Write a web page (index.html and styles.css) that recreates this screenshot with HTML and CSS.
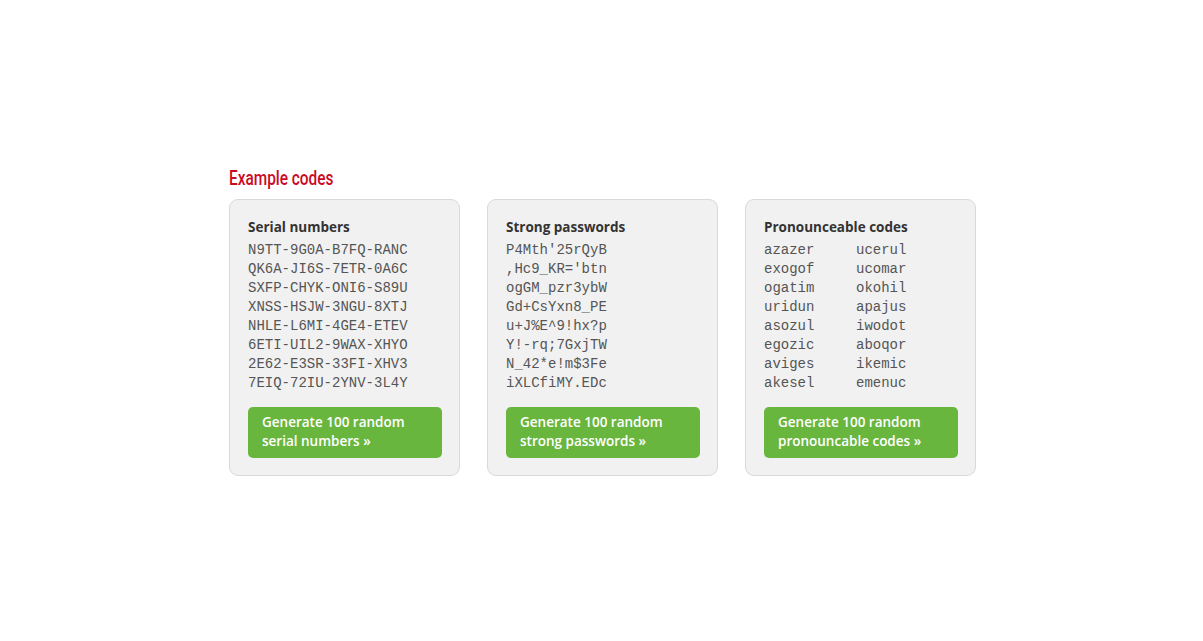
FILE: index.html
```html
<!DOCTYPE html>
<html>
<head>
<meta charset="utf-8">
<link rel="stylesheet" href="styles.css">
</head>
<body>
<main class="wrap">
  <h2 class="heading"><span class="heading-text">Example codes</span></h2>
  <div class="cards">
    <section class="card">
      <h3 class="card-title">Serial numbers</h3>
      <div class="codes">
        <div>N9TT-9G0A-B7FQ-RANC</div>
        <div>QK6A-JI6S-7ETR-0A6C</div>
        <div>SXFP-CHYK-ONI6-S89U</div>
        <div>XNSS-HSJW-3NGU-8XTJ</div>
        <div>NHLE-L6MI-4GE4-ETEV</div>
        <div>6ETI-UIL2-9WAX-XHYO</div>
        <div>2E62-E3SR-33FI-XHV3</div>
        <div>7EIQ-72IU-2YNV-3L4Y</div>
      </div>
      <a class="btn" href="#">Generate 100 random<br>serial numbers »</a>
    </section>
    <section class="card">
      <h3 class="card-title">Strong passwords</h3>
      <div class="codes">
        <div>P4Mth'25rQyB</div>
        <div>,Hc9_KR='btn</div>
        <div>ogGM_pzr3ybW</div>
        <div>Gd+CsYxn8_PE</div>
        <div>u+J%E^9!hx?p</div>
        <div>Y!-rq;7GxjTW</div>
        <div>N_42*e!m$3Fe</div>
        <div>iXLCfiMY.EDc</div>
      </div>
      <a class="btn" href="#">Generate 100 random<br>strong passwords »</a>
    </section>
    <section class="card">
      <h3 class="card-title">Pronounceable codes</h3>
      <div class="codes two-col">
        <div>azazer</div><div>ucerul</div>
        <div>exogof</div><div>ucomar</div>
        <div>ogatim</div><div>okohil</div>
        <div>uridun</div><div>apajus</div>
        <div>asozul</div><div>iwodot</div>
        <div>egozic</div><div>aboqor</div>
        <div>aviges</div><div>ikemic</div>
        <div>akesel</div><div>emenuc</div>
      </div>
      <a class="btn" href="#">Generate 100 random<br>pronouncable codes »</a>
    </section>
  </div>
</main>
</body>
</html>
```

FILE: styles.css
```css
html, body {
  margin: 0;
  padding: 0;
  background: #ffffff;
}
body {
  font-family: "Open Sans", "DejaVu Sans", sans-serif;
  color: #333333;
}
.wrap {
  width: 747px;
  margin-left: calc(50% - 372.5px);
  padding-top: 166px;
}
.heading {
  margin: 0 0 8px 0;
  font-family: Roboto, "Liberation Sans", sans-serif;
  font-weight: 500;
  font-size: 20px;
  line-height: 25px;
  color: #cc0a1f;
}
.heading-text {
  display: inline-block;
  transform: scaleX(0.77);
  transform-origin: left center;
}
.cards {
  display: flex;
  gap: 27px;
}
.card {
  width: 231px;
  flex: none;
  box-sizing: border-box;
  background: #f1f1f1;
  border: 1px solid #d9d9d9;
  border-radius: 9px;
  padding: 17px 17px 17px 18px;
}
.card-title {
  margin: 0 0 4px 0;
  font-size: 13.5px;
  font-weight: 700;
  line-height: 20px;
  color: #333333;
}
.codes {
  font-family: "Liberation Mono", "Courier New", monospace;
  font-size: 14px;
  line-height: 19px;
  color: #555555;
}
.two-col {
  display: grid;
  grid-template-columns: 92px auto;
}
.btn {
  display: block;
  margin-top: 14px;
  background: #69b63f;
  color: #ffffff;
  text-decoration: none;
  border-radius: 5px;
  padding: 6px 14px 7px 14px;
  font-size: 13.5px;
  font-weight: 600;
  line-height: 19px;
}
```
